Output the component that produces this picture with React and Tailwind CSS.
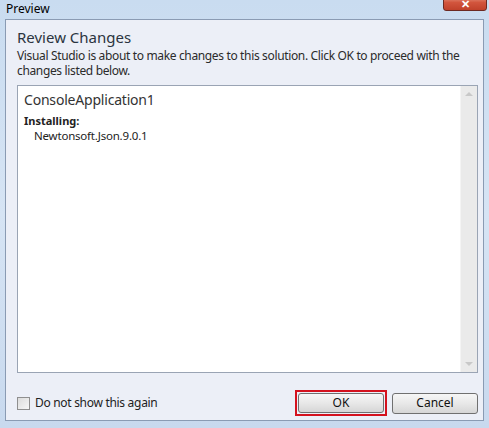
export default function App() {
  return (
    <div
      className="relative w-[489px] h-[428px] overflow-hidden bg-gradient-to-b from-[#c9dcf0] via-[#d6e4f4] to-[#c8d9ee]"
      style={{ fontFamily: '"Noto Sans", "Open Sans", sans-serif' }}
    >
      {/* title bar */}
      <div className="h-[19px] flex items-start">
        <span className="ml-[6px] mt-[1px] text-[12px] leading-[16px] text-black">Preview</span>
      </div>
      {/* close button */}
      <div className="absolute right-[2px] top-[-6px] w-[44px] h-[17px] rounded-[3px] border border-[#6d2a22] bg-gradient-to-b from-[#e8a493] via-[#d2553d] to-[#c0412b] flex items-end justify-center">
        <span className="text-white text-[11px] font-bold leading-[12px]">✕</span>
      </div>

      {/* client area */}
      <div className="ml-[5px] mr-[5px] h-[402px] border border-[#8a9bb3] bg-[#eceff7] flex flex-col pl-[11px] pr-[5px]">
        <div className="mt-[7px] text-[15px] leading-[20px] text-[#2b3440]">Review Changes</div>
        <div className="mt-[1px] text-[12px] leading-[15px] text-[#2b2b2b] tracking-[-0.35px]">
          Visual Studio is about to make changes to this solution. Click OK to proceed with the changes listed below.
        </div>

        {/* change list */}
        <div className="mt-[7px] h-[288px] border border-[#9aa4b4] bg-white flex">
          <div className="flex-1 pl-[6px] pt-[5px]">
            <div className="text-[14px] leading-[18px] text-[#333] tracking-[-0.2px]">ConsoleApplication1</div>
            <div className="mt-[5px] text-[11px] leading-[14px] font-bold text-[#222]">Installing:</div>
            <div className="pl-[10px] text-[11.5px] leading-[15px] text-[#222] tracking-[-0.2px]">Newtonsoft.Json.9.0.1</div>
          </div>
          <div className="w-[17px] bg-[#eaeaea] border-l border-[#f4f4f4] flex flex-col justify-between items-center py-[5px]">
            <svg width="8" height="5" viewBox="0 0 8 5"><path d="M0 5 L4 1 L8 5 Z" fill="#c8c8c8" /></svg>
            <svg width="8" height="5" viewBox="0 0 8 5"><path d="M0 0 L4 4 L8 0 Z" fill="#c8c8c8" /></svg>
          </div>
        </div>

        {/* footer */}
        <div className="mt-[17px] flex items-center">
          <div className="w-[13px] h-[13px] border border-[#8f8f8f] bg-gradient-to-br from-[#dcdcdc] to-[#f7f7f7]" />
          <span className="ml-[5px] text-[12px] leading-[16px] text-[#222] tracking-[-0.3px]">Do not show this again</span>
          <div className="ml-auto flex items-center">
            <div className="border-[2px] border-[#d4121e] p-[1px]">
              <div className="w-[86px] h-[20px] rounded-[3px] border border-[#707070] bg-gradient-to-b from-[#f6f6f6] via-[#e8e8e8] to-[#d6d6d6] flex items-center justify-center text-[12px] text-[#111]">
                OK
              </div>
            </div>
            <div className="ml-[5px] w-[86px] h-[21px] rounded-[3px] border border-[#707070] bg-gradient-to-b from-[#f6f6f6] via-[#e8e8e8] to-[#d6d6d6] flex items-center justify-center text-[12px] text-[#111]">
              Cancel
            </div>
          </div>
        </div>
      </div>
    </div>
  );
}
